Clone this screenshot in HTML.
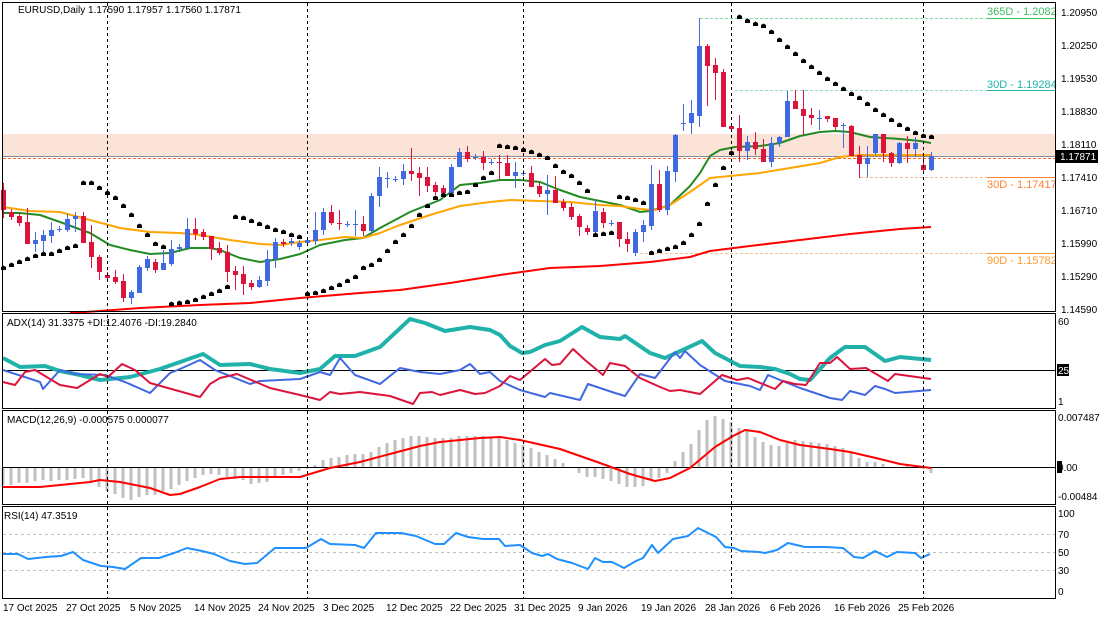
<!DOCTYPE html>
<html><head><meta charset="utf-8"><style>
html,body{margin:0;padding:0;background:#fff;width:1100px;height:619px;overflow:hidden}
svg{display:block}
text{font-family:"Liberation Sans",sans-serif;font-size:10px;fill:#000}
</style></head><body>
<svg id="s" width="1100" height="619" viewBox="0 0 1100 619" xmlns="http://www.w3.org/2000/svg">
<rect x="0" y="0" width="1100" height="619" fill="#fff"/>
<!-- zone -->
<rect x="3" y="134" width="1052" height="22" fill="#fbe3d8"/>
<line x1="3" y1="156.5" x2="1055" y2="156.5" stroke="#8c8c9c" stroke-width="1"/>
<line x1="3" y1="158.5" x2="1055" y2="158.5" stroke="#ff6a20" stroke-width="1" stroke-dasharray="3,2"/>
<line x1="700" y1="18.5" x2="1055" y2="18.5" stroke="#7fdba0" stroke-dasharray="3,2"/>
<line x1="987" y1="18.5" x2="1055" y2="18.5" stroke="#3cc060"/>
<line x1="735" y1="90.5" x2="1055" y2="90.5" stroke="#8fd8c8" stroke-dasharray="3,2"/>
<line x1="987" y1="90.5" x2="1055" y2="90.5" stroke="#20b2aa"/>
<line x1="860" y1="177.5" x2="1055" y2="177.5" stroke="#f5b890" stroke-dasharray="3,2"/>
<line x1="987" y1="177.5" x2="1055" y2="177.5" stroke="#ff7f30"/>
<line x1="640" y1="253.5" x2="1055" y2="253.5" stroke="#f5c090" stroke-dasharray="3,2"/>
<line x1="987" y1="253.5" x2="1055" y2="253.5" stroke="#ff9a30"/>
<text x="987" y="15" style="fill:#3cc060;font-size:11px">365D - 1.2082</text>
<text x="987" y="88" style="fill:#20b2aa;font-size:11px">30D - 1.19284</text>
<text x="987" y="188" style="fill:#ff7f30;font-size:11px">30D - 1.17417</text>
<text x="987" y="264" style="fill:#ff9a30;font-size:11px">90D - 1.15782</text>
<!-- RSI dashed levels -->
<line x1="3" y1="534.5" x2="1055" y2="534.5" stroke="#c0c0c0" stroke-dasharray="3,3"/>
<line x1="3" y1="552.5" x2="1055" y2="552.5" stroke="#c0c0c0" stroke-dasharray="3,3"/>
<line x1="3" y1="570.5" x2="1055" y2="570.5" stroke="#c0c0c0" stroke-dasharray="3,3"/>
<line x1="3" y1="370.5" x2="1055" y2="370.5" stroke="#000"/>
<line x1="3" y1="467.5" x2="1055" y2="467.5" stroke="#000"/>
<g id="dyn"></g>
<!-- vertical separators -->
<g stroke="#000" stroke-dasharray="3,3">
<line x1="107.5" y1="3" x2="107.5" y2="598"/>
<line x1="307.5" y1="3" x2="307.5" y2="598"/>
<line x1="523.5" y1="3" x2="523.5" y2="598"/>
<line x1="731.5" y1="3" x2="731.5" y2="598"/>
<line x1="923.5" y1="3" x2="923.5" y2="598"/>
</g>
<!-- pane frames -->
<g fill="none" stroke="#000">
<rect x="2.5" y="2.5" width="1053" height="309"/>
<rect x="2.5" y="313.5" width="1053" height="95"/>
<rect x="2.5" y="410.5" width="1053" height="94"/>
<rect x="2.5" y="506.5" width="1053" height="92"/>
</g>
<text x="18" y="13">EURUSD,Daily  1.17590 1.17957 1.17560 1.17871</text>
<text x="7" y="326">ADX(14) 31.3375 +DI:12.4076 -DI:19.2840</text>
<text x="7" y="423">MACD(12,26,9) -0.000575 0.000077</text>
<text x="4" y="519">RSI(14) 47.3519</text>
<!-- right axis -->
<g>
<text x="1061" y="16">1.20950</text>
<text x="1061" y="49">1.20250</text>
<text x="1061" y="82">1.19530</text>
<text x="1061" y="115">1.18830</text>
<text x="1061" y="148">1.18110</text>
<rect x="1056" y="150" width="42" height="13" fill="#000"/>
<text x="1060" y="160" style="fill:#fff">1.17871</text>
<text x="1061" y="181">1.17410</text>
<text x="1061" y="214">1.16710</text>
<text x="1061" y="247">1.15990</text>
<text x="1061" y="280">1.15290</text>
<text x="1061" y="313">1.14590</text>
<text x="1058" y="325">60</text>
<rect x="1057" y="364" width="12" height="12" fill="#000"/>
<text x="1058" y="374" style="fill:#fff">25</text>
<text x="1058" y="405">1</text>
<text x="1058" y="421">0.007487</text>
<rect x="1057" y="461" width="5" height="12" fill="#000"/>
<text x="1058" y="471">0.00</text>
<text x="1058" y="500">-0.00484</text>
<text x="1058" y="517">100</text>
<text x="1058" y="538">70</text>
<text x="1058" y="556">50</text>
<text x="1058" y="574">30</text>
<text x="1058" y="595">0</text>
</g>
<!-- dates -->
<g>
<text x="3" y="611">17 Oct 2025</text>
<text x="66" y="611">27 Oct 2025</text>
<text x="130" y="611">5 Nov 2025</text>
<text x="194" y="611">14 Nov 2025</text>
<text x="258" y="611">24 Nov 2025</text>
<text x="323" y="611">3 Dec 2025</text>
<text x="386" y="611">12 Dec 2025</text>
<text x="450" y="611">22 Dec 2025</text>
<text x="514" y="611">31 Dec 2025</text>
<text x="578" y="611">9 Jan 2026</text>
<text x="641" y="611">19 Jan 2026</text>
<text x="705" y="611">28 Jan 2026</text>
<text x="770" y="611">6 Feb 2026</text>
<text x="834" y="611">16 Feb 2026</text>
<text x="898" y="611">25 Feb 2026</text>
</g>
</svg>
<script>
var NS="http://www.w3.org/2000/svg",g=document.getElementById("dyn");
function el(t,a){var e=document.createElementNS(NS,t);for(var k in a)e.setAttribute(k,a[k]);g.appendChild(e);return e;}
function pl(p,c,w){el("polyline",{points:p,fill:"none",stroke:c,"stroke-width":w,"stroke-linejoin":"round"});}
// MACD histogram
var h=[-17,-17,-15,-15,-13,-12,-13,-12,-12,-11,-10,-15,-19,-23,-26,-30,-32,-29,-27,-27,-23,-21,-17,-13,-10,-7,-6,-7,-9,-11,-12,-16,-15,-14,-9,-7,-5,-3,-1,2,7,9,10,12,13,13,15,20,24,27,29,31,31,30,29,29,29,31,31,31,31,30,29,27,24,
22,19,15,12,8,4,0,-5,-9,-9,-11,-13,-16,-19,-19,-18,-12,-10,-5,6,15,23,37,47,51,48,45,39,37,30,25,22,21,24,27,26,25,24,23,21,19,14,9,5,5,3,0,0,1,1,-1,-5];
for(var i=0;i<h.length;i++){var x=3+8*i,v=h[i];if(v==0)continue;el("rect",{x:x-1.5,y:v>0?467-v:468,width:3,height:Math.abs(v),fill:"#c0c0c0"});}
// MA lines
pl("3,213 20,213 40,215 60,222 90,233 110,245 130,250 150,254 170,253 190,248 210,248 220,250 240,258 260,262 280,259 300,254 320,245 345,240 363,238 380,228 410,212 440,200 460,185 480,183 500,180 520,180 540,182 560,190 580,197 600,201 620,205 640,212 650,211 670,205 690,186 700,173 710,156 720,150 735,147 760,146 780,143 800,136 820,132 835,131 850,132 870,137 900,139 920,141 931,143","#228b22",2);
pl("3,207 30,211 60,212 90,220 120,228 150,232 180,233 200,235 230,240 260,244 280,245 300,242 320,240 345,237 363,238 380,233 400,225 430,215 460,206 490,202 510,200 540,201 570,202 600,205 620,206 640,209 655,210 670,205 690,192 710,178 730,176 760,173 790,168 820,163 840,157 860,155 880,155 931,155","#ffa500",2);
pl("70,313 100,311 140,308 200,305 250,303 300,298 360,293 400,290 450,283 500,275 550,268 600,266 650,262 690,257 710,251 750,246 800,240 850,234 900,229 931,227","#ff0000",2);
// candles
var C=[[190,210,'r',183,218],[212,217,'r'],[216,223,'r'],[222,244,'r',208,244],[240,244,'b',232,252],[235,241,'b',230,252],[230,236,'b',222,243],[229,229,'c'],[219,230,'b',214,232],[216,219,'b',212,232],[216,243,'r',212,243],[242,257,'r',225,268],[257,272,'r',255,280],[275,278,'r'],[277,282,'r',270,284],[281,298,'r',274,302],[292,298,'b',290,304],[267,293,'b',265,293],[259,268,'b'],[262,270,'r'],[263,270,'b',250,270],[249,264,'b',240,266],[247,249,'b'],[229,248,'b',218,250],[229,234,'r',218,240],[232,237,'r'],[236,249,'r',236,260],[248,253,'r',242,255],[252,272,'r',245,282],[271,275,'r',266,290],[274,284,'r',266,295],[283,287,'r'],[280,287,'b',276,288],[259,281,'b',250,286],[242,259,'b',238,268],[242,244,'r'],[241,243,'b'],[243,247,'b'],[240,243,'b'],[230,241,'b',212,245],[212,230,'b',208,235],[212,223,'r',205,225],[223,224,'r',210,230],[224,224,'c'],[224,224,'c',210,236],
[224,231,'r',216,236],[196,231,'b'],[177,196,'b',167,207],[178,178,'c',172,188],[179,179,'c'],[171,179,'b',164,185],[171,174,'r',148,181],[173,178,'r',167,196],[177,186,'r',167,192],[185,192,'r'],[188,193,'r'],[167,193,'b'],[152,167,'b',148,167],[152,159,'r',146,162],[157,157,'c'],[157,163,'r',151,170],[162,162,'c'],[162,163,'r',155,180],[163,176,'r',155,176],[172,176,'b',162,188],[173,173,'c'],[173,187,'r',166,187],[186,194,'r'],[190,194,'b',175,215],[190,203,'r',176,203],[202,208,'r'],[207,217,'r',203,220],[216,227,'r',214,236],[228,232,'r'],[211,232,'b',200,235],[212,223,'r',208,228],[223,223,'c'],[222,239,'r',222,247],[239,244,'r',232,252],[232,253,'b'],[225,232,'b',220,242],[184,226,'b',165,230],[184,210,'r',170,212],[171,210,'b',166,215],[135,172,'b',134,182],
[123,123,'c',104,131],[113,123,'b',100,134],[46,116,'b',18,127],[46,66,'r',44,106],[65,73,'r',58,100],[72,127,'r',69,127],[126,129,'r'],[128,151,'r',115,162],[142,151,'b',136,160],[142,149,'r',132,155],[149,162,'r',139,162],[143,162,'b',137,167],[137,143,'b',136,147],[101,137,'b',91,137],[101,109,'r',90,109],[109,116,'r',90,135],[115,118,'r',108,125],[118,118,'c',110,130],[116,119,'r',116,122],[118,127,'r',118,130],[125,125,'c',123,148],[126,156,'r',125,156],[155,164,'r',146,178],[158,164,'b',146,177],[134,153,'b',134,155],[134,153,'r',134,162],[153,163,'r',152,167],[143,163,'b',142,164],[143,149,'r',136,163],[143,149,'b',137,157],[165,170,'r',155,171],[156,170,'b',152,171]];
for(var i=0;i<C.length;i++){var c=C[i],x=3+8*i,col=c[2]=='r'?'#dc143c':'#4169e1';
var wt=c.length>3?c[3]:c[0]-3,wb=c.length>3?c[4]:c[1]+3;
el("line",{x1:x+.5,y1:wt,x2:x+.5,y2:wb,stroke:col,"stroke-width":1});
if(c[2]=='c')el("rect",{x:x-2,y:c[0],width:5,height:1,fill:col});
else el("rect",{x:x-2,y:c[0],width:5,height:Math.max(1,c[1]-c[0]),fill:col});}
// PSAR
var P=[[0,268],[1,265],[2,262],[3,259],[4,256],[5,254],[6,254],[7,251],[8,248],[9,246],[10,183],[11,183],[12,188],[13,193],[14,198],[15,206],[16,215],[17,226],[18,235],[19,244],[20,247],[21,304],[22,303],[23,302],[24,300],[25,297],[26,294],[27,291],[28,287],[29,217],[30,218],[31,221],[32,224],[33,227],[34,230],[35,232],[36,235],[37,237],[38,294],[39,293],[40,291],[41,288],[42,285],[43,281],[44,277],[45,268],[46,265],[47,260],[48,251],[49,242],[50,235],[51,226],[52,215],[53,206],[54,198],[55,195],[56,195],[57,193],[58,192],[59,185],[60,178],[61,173],[62,146],[63,147],[64,148],[65,150],[66,152],[67,155],[68,158],[69,166],[70,172],[71,176],[72,183],[73,191],[74,235],[75,234],[76,233],[77,197],[78,198],[79,200],[80,203],[81,253],[82,251],[83,249],[84,247],[85,243],[86,235],[87,224],[88,204],[89,185],[90,168],[91,153],[92,17],[93,21],[94,24],[95,26],[96,32],[97,40],[98,47],[99,54],[100,61],[101,67],[102,73],[103,79],[104,84],[105,89],[106,94],[107,98],[108,104],[109,110],[110,115],[111,120],[112,125],[113,129],[114,133],[115,136],[116,137]];
for(var i=0;i<P.length;i++){var x=3+8*P[i][0],y=P[i][1];el("path",{d:"M"+(x-2)+" "+(y+2)+" L"+(x-2)+" "+(y-1)+" L"+(x+.5)+" "+(y-2.5)+" L"+(x+3)+" "+(y-1)+" L"+(x+3)+" "+(y+2)+"Z",fill:"#000"});}
// ADX
pl("3,358 20,367 45,366 60,371 80,375 100,380 130,377 160,369 203,354 220,365 250,364 270,369 300,373 320,369 335,356 355,356 380,347 410,319 425,323 445,331 470,327 490,330 500,335 510,346 522,353 530,352 545,345 560,341 582,327 600,337 620,339 625,336 650,353 665,358 685,349 702,341 715,353 740,366 760,367 775,369 790,374 800,379 810,380 830,358 845,347 865,347 885,361 900,357 931,360","#20b2aa",4);
pl("3,370 40,382 43,389 60,370 75,374 105,375 125,382 150,393 170,373 180,369 200,360 215,370 250,384 260,381 300,379 320,372 330,375 340,358 355,375 380,384 400,368 420,372 440,374 460,370 470,364 480,374 490,372 500,381 520,390 545,397 550,393 580,400 588,384 615,393 625,396 640,374 655,378 675,352 680,358 685,351 700,365 725,381 750,386 760,390 768,375 785,382 800,388 830,398 842,400 850,391 865,395 875,386 885,389 895,393 931,390","#4169e1",2);
pl("3,382 15,385 25,372 35,370 60,385 77,388 100,374 108,377 122,364 135,370 150,383 200,397 210,384 220,378 237,374 270,388 300,395 320,400 330,392 340,394 360,392 390,396 413,404 420,393 432,392 440,395 460,390 475,394 485,393 500,386 510,376 520,380 545,359 552,365 560,364 573,349 585,360 603,375 610,363 625,366 640,378 660,387 670,391 680,390 700,394 722,375 737,380 748,378 775,389 783,381 795,384 806,385 820,363 830,363 837,357 850,369 866,368 888,381 895,374 931,379","#dc143c",2);
// MACD signal
pl("3,487 40,487 60,485 90,482 100,480 120,482 150,488 170,495 180,494 200,487 220,479 240,477 270,477 300,477 310,474 330,468 360,462 390,454 420,446 440,442 460,440 480,438 500,437 520,440 560,449 600,463 630,474 655,481 670,478 690,468 715,447 733,436 745,430 760,432 780,440 800,445 830,449 850,452 880,459 900,464 931,468","#ff0000",2);
// RSI
pl("3,554 18,554 28,559 46,557 61,556 73,552 83,560 101,566 113,567 125,569 141,558 159,558 174,553 187,548 202,551 214,554 230,561 245,564 257,563 275,548 306,548 321,539 330,544 355,545 364,548 376,533 401,533 416,536 435,544 444,544 456,533 468,537 483,539 499,539 505,546 520,545 532,553 542,556 548,554 557,559 572,563 588,569 595,558 603,562 612,562 624,568 636,561 643,558 652,545 658,553 673,539 688,536 698,528 710,534 716,537 725,547 734,548 741,551 759,552 765,553 777,550 788,543 805,547 826,547 843,548 854,557 863,558 875,551 887,557 897,552 915,553 921,558 930,554","#1e90ff",2);
</script>
</body></html>
